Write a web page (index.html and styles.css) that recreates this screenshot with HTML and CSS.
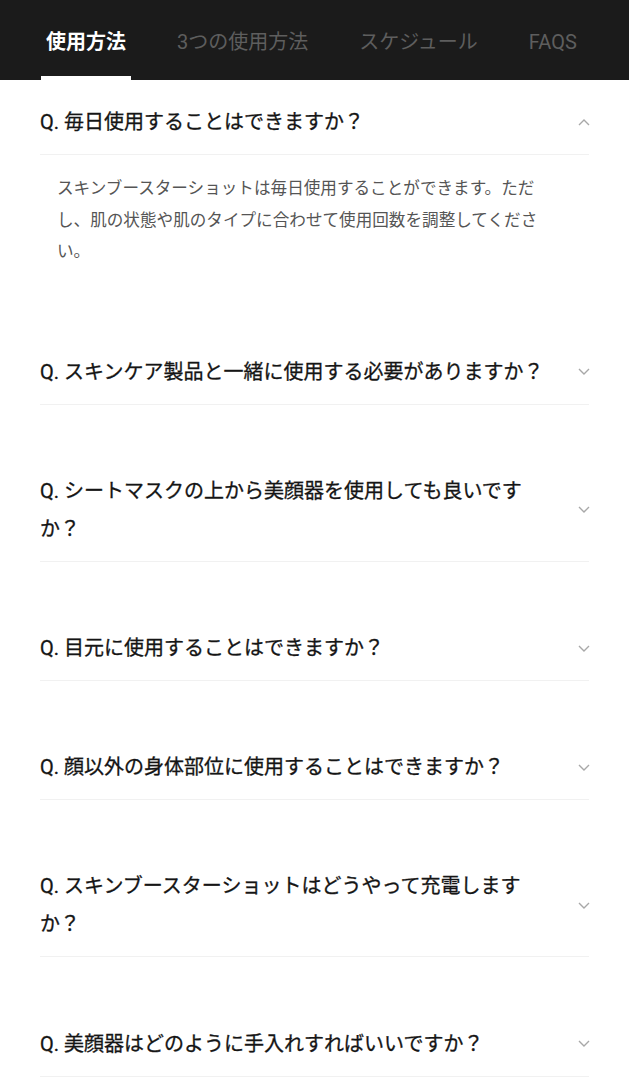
FILE: index.html
```html
<!DOCTYPE html>
<html lang="ja">
<head>
    <meta charset="UTF-8">
    <meta name="viewport" content="width=device-width, initial-scale=1.0">
    <title>FAQS - スキンブースターショット</title>
    <link rel="stylesheet" href="styles.css">
</head>
<body>
    <nav class="tabs">
        <a href="#" class="tab active">使用方法</a>
        <a href="#" class="tab">3つの使用方法</a>
        <a href="#" class="tab">スケジュール</a>
        <a href="#" class="tab">FAQS</a>
    </nav>

    <div class="faq-list">
        <div class="faq-item open">
            <div class="faq-question">
                <span class="q-text">Q. 毎日使用することはできますか？</span>
                <svg class="chevron" viewBox="0 0 12 7"><polyline points="1,6 6,1 11,6"/></svg>
            </div>
            <div class="faq-answer">
                スキンブースターショットは毎日使用することができます。ただし、肌の状態や肌のタイプに合わせて使用回数を調整してください。
            </div>
        </div>

        <div class="faq-item">
            <div class="faq-question">
                <span class="q-text">Q. スキンケア製品と一緒に使用する必要がありますか？</span>
                <svg class="chevron" viewBox="0 0 12 7"><polyline points="1,1 6,6 11,1"/></svg>
            </div>
        </div>

        <div class="faq-item">
            <div class="faq-question">
                <span class="q-text">Q. シートマスクの上から美顔器を使用しても良いですか？</span>
                <svg class="chevron" viewBox="0 0 12 7"><polyline points="1,1 6,6 11,1"/></svg>
            </div>
        </div>

        <div class="faq-item">
            <div class="faq-question">
                <span class="q-text">Q. 目元に使用することはできますか？</span>
                <svg class="chevron" viewBox="0 0 12 7"><polyline points="1,1 6,6 11,1"/></svg>
            </div>
        </div>

        <div class="faq-item">
            <div class="faq-question">
                <span class="q-text">Q. 顔以外の身体部位に使用することはできますか？</span>
                <svg class="chevron" viewBox="0 0 12 7"><polyline points="1,1 6,6 11,1"/></svg>
            </div>
        </div>

        <div class="faq-item">
            <div class="faq-question">
                <span class="q-text">Q. スキンブースターショットはどうやって充電しますか？</span>
                <svg class="chevron" viewBox="0 0 12 7"><polyline points="1,1 6,6 11,1"/></svg>
            </div>
        </div>

        <div class="faq-item">
            <div class="faq-question">
                <span class="q-text">Q. 美顔器はどのように手入れすればいいですか？</span>
                <svg class="chevron" viewBox="0 0 12 7"><polyline points="1,1 6,6 11,1"/></svg>
            </div>
        </div>
    </div>
</body>
</html>
```

FILE: styles.css
```css
* {
    margin: 0;
    padding: 0;
    box-sizing: border-box;
}

body {
    font-family: Roboto, 'Noto Sans CJK JP', sans-serif;
    background: #fff;
    color: #222;
}

/* top tab bar */
.tabs {
    display: flex;
    align-items: stretch;
    gap: 41px;
    height: 80px;
    padding-left: 41px;
    background: #1b1b1b;
}

.tab {
    display: flex;
    align-items: center;
    padding: 8px 5px 0;
    font-size: 20px;
    line-height: 28px;
    color: #5e5e5e;
    text-decoration: none;
    white-space: nowrap;
    border-bottom: 4px solid transparent;
}

.tab.active {
    color: #fff;
    font-weight: 700;
    border-bottom-color: #fff;
}

/* faq accordion */
.faq-list {
    padding: 23px 40px 0;
}

.faq-item + .faq-item {
    margin-top: 67.2px;
}

.faq-question {
    display: flex;
    align-items: center;
    justify-content: space-between;
    padding-bottom: 13px;
    border-bottom: 1px solid #f1f1f1;
}

.q-text {
    width: 510px;
    font-size: 20px;
    font-weight: 400;
    line-height: 38px;
    color: #151515;
    -webkit-text-stroke: 0.3px #151515;
}

.chevron {
    width: 12px;
    height: 7px;
    margin-right: -1px;
    fill: none;
    stroke: #a8a8a8;
    stroke-width: 1.4;
}

.faq-answer {
    padding: 18px 45px 18px 17px;
    font-size: 16.6px;
    line-height: 31.5px;
    color: #555;
}
```
